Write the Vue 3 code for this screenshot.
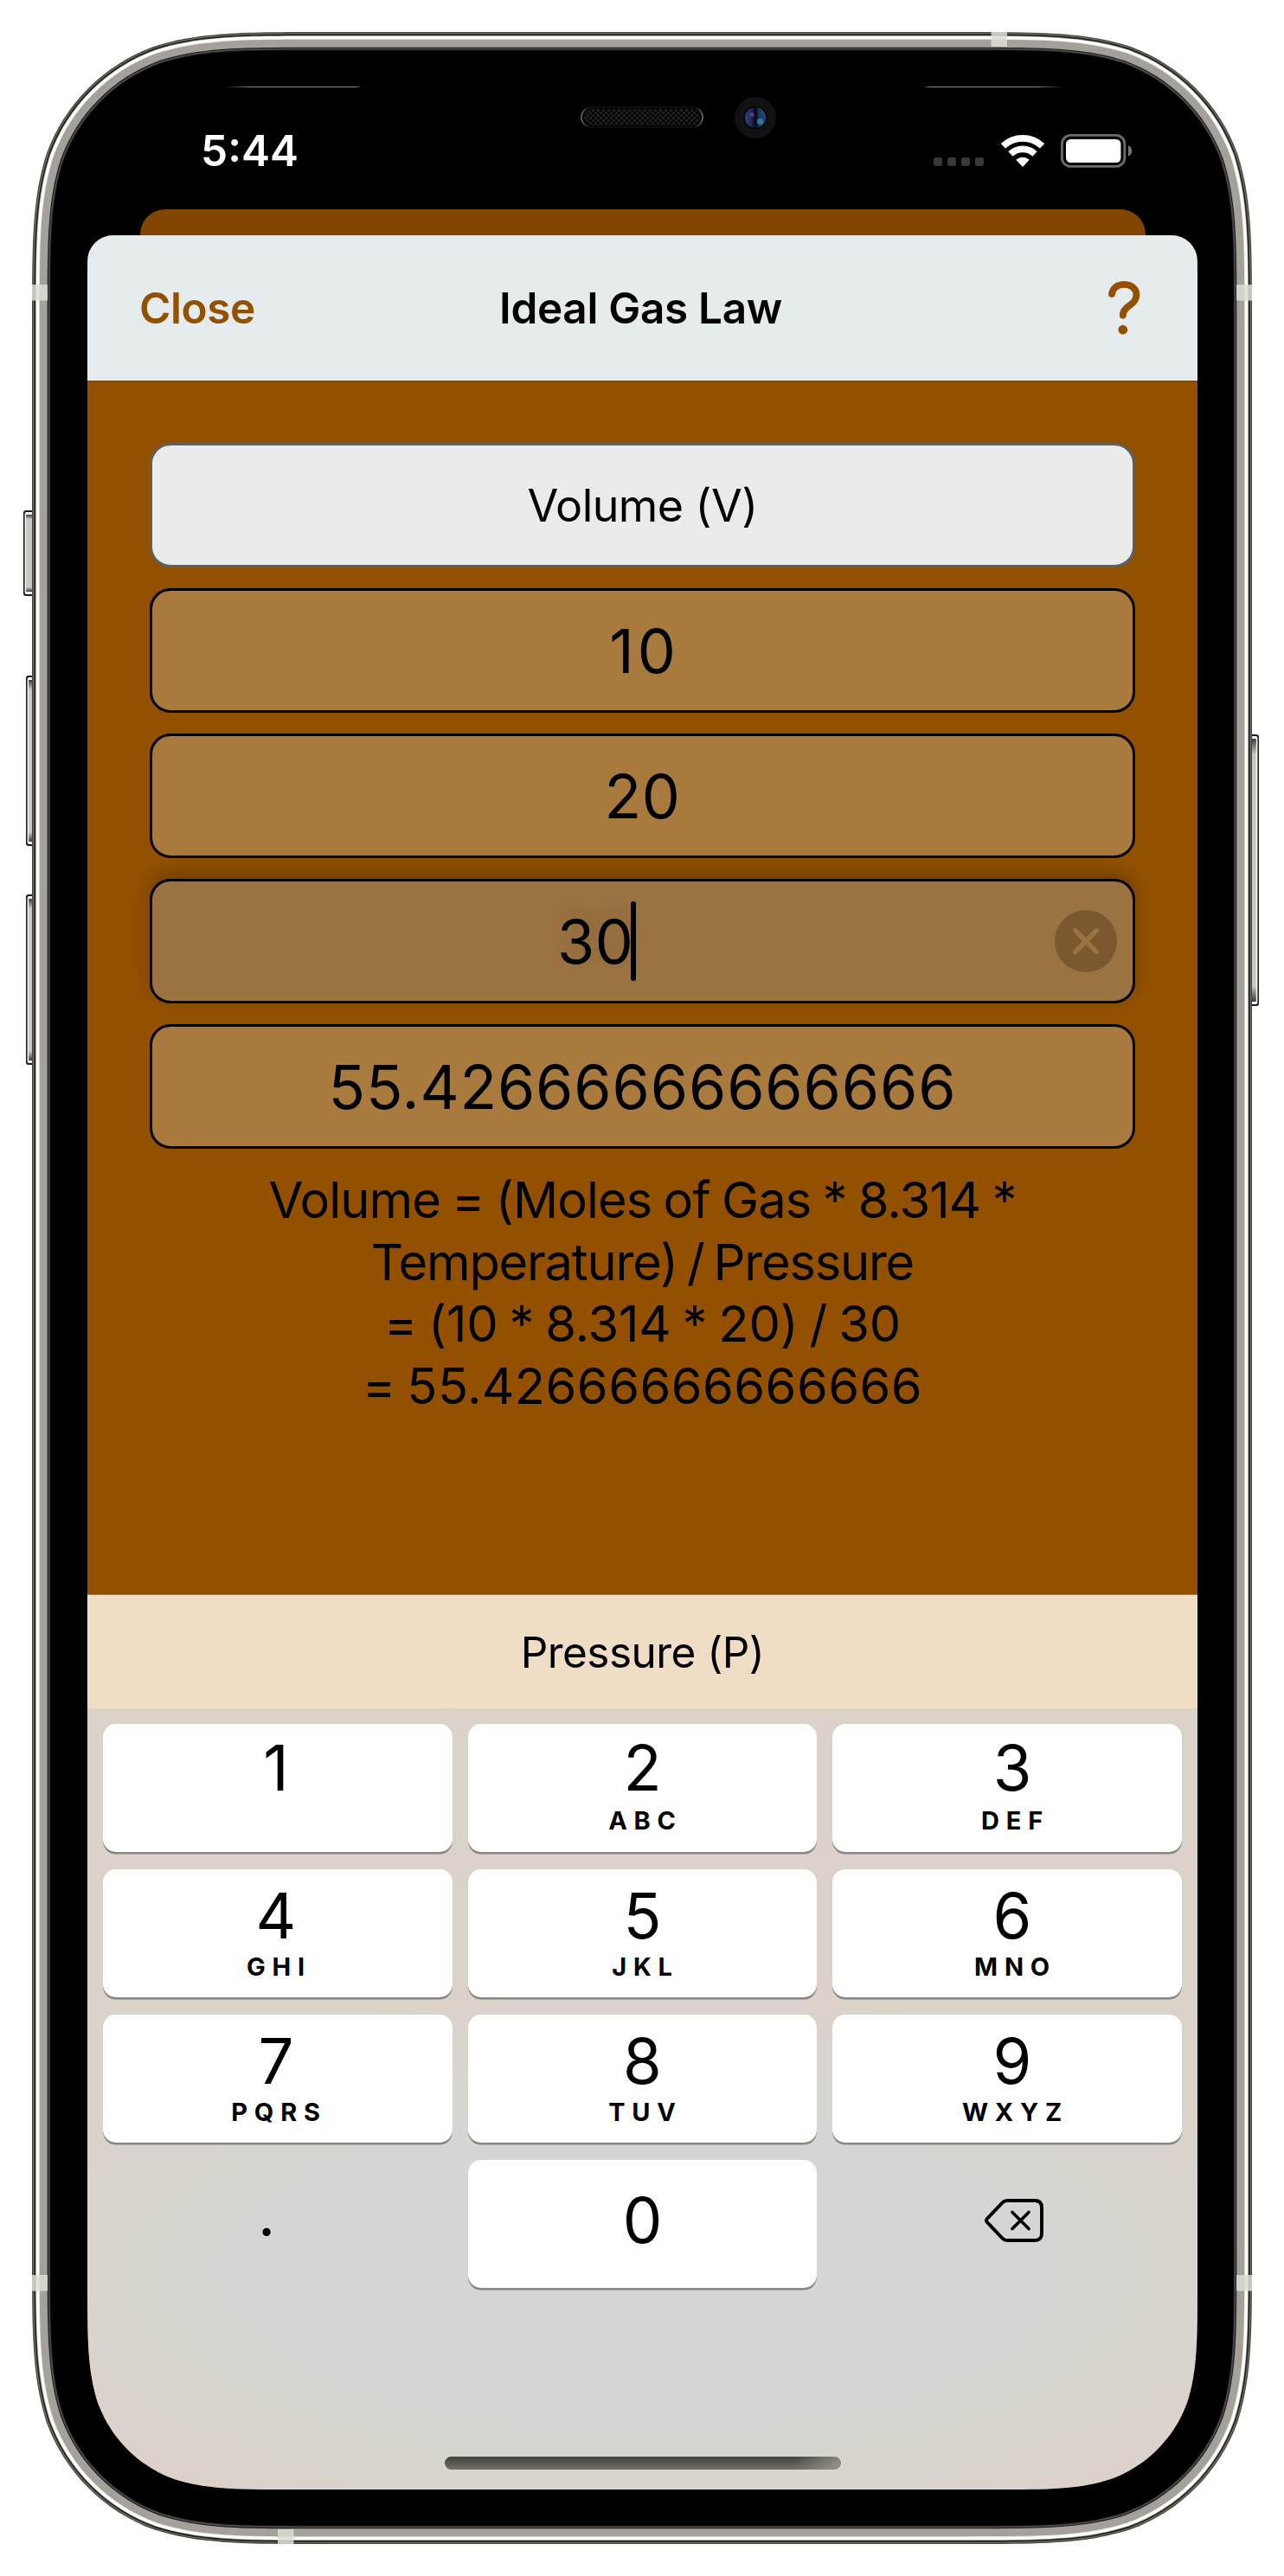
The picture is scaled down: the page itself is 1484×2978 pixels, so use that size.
<script setup>
// Rounded rectangle with continuous-curvature corners
function squircle(x, y, w, h, r) {
  const a = 1.52866 * r, b = 1.08849 * r, c = 0.86841 * r, d = 0.63149 * r
  const e = 0.37282 * r, f = 0.16906 * r, g = 0.07491 * r
  const R = x + w, B = y + h
  return [
    `M${x + a} ${y}H${R - a}`,
    `C${R - b} ${y} ${R - c} ${y} ${R - d} ${y + g}`,
    `C${R - e} ${y + f} ${R - f} ${y + e} ${R - g} ${y + d}`,
    `C${R} ${y + c} ${R} ${y + b} ${R} ${y + a}`,
    `V${B - a}`,
    `C${R} ${B - b} ${R} ${B - c} ${R - g} ${B - d}`,
    `C${R - f} ${B - e} ${R - e} ${B - f} ${R - d} ${B - g}`,
    `C${R - c} ${B} ${R - b} ${B} ${R - a} ${B}`,
    `H${x + a}`,
    `C${x + b} ${B} ${x + c} ${B} ${x + d} ${B - g}`,
    `C${x + e} ${B - f} ${x + f} ${B - e} ${x + g} ${B - d}`,
    `C${x} ${B - c} ${x} ${B - b} ${x} ${B - a}`,
    `V${y + a}`,
    `C${x} ${y + b} ${x} ${y + c} ${x + g} ${y + d}`,
    `C${x + f} ${y + e} ${x + e} ${y + f} ${x + d} ${y + g}`,
    `C${x + c} ${y} ${x + b} ${y} ${x + a} ${y}Z`,
  ].join('')
}

const layers = [
  [0, '#45443f'], [1.3, '#7b7a72'], [2.3, '#24231f'], [4, '#8d8c85'], [4.7, '#fdfefb'],
  [8, '#e4e3df'], [8.8, '#a5a19a'], [17.7, '#19191b'], [18.8, '#4c4c4f'], [20.6, '#161617'], [21.4, '#000'],
].map(([i, fill]) => ({ fill, d: squircle(37 + i, 37 + i, 1410 - 2 * i, 2904 - 2 * i, 223 - i) }))

const screenClip = { clipPath: `path("${squircle(0, 0, 1283, 2777, 159)}")` }

const sideButtons = [
  { x: 27, y: 590, w: 14, h: 99, side: 'left' },
  { x: 30, y: 781, w: 11, h: 197, side: 'left' },
  { x: 30, y: 1034, w: 11, h: 197, side: 'left' },
  { x: 1443, y: 849, w: 12, h: 314, side: 'right' },
]

const keys = [
  { n: '1', l: '', first: true }, { n: '2', l: 'ABC', first: true }, { n: '3', l: 'DEF', first: true },
  { n: '4', l: 'GHI' }, { n: '5', l: 'JKL' }, { n: '6', l: 'MNO' },
  { n: '7', l: 'PQRS' }, { n: '8', l: 'TUV' }, { n: '9', l: 'WXYZ' },
]
</script>

<template>
  <div class="device">
    <svg class="frame" width="1484" height="2978" viewBox="0 0 1484 2978" aria-hidden="true">
      <defs>
        <linearGradient id="btn" x1="0" y1="0" x2="0" y2="1">
          <stop offset="0" stop-color="#3c3b38" />
          <stop offset=".06" stop-color="#c9c8c4" />
          <stop offset=".94" stop-color="#c9c8c4" />
          <stop offset="1" stop-color="#3c3b38" />
        </linearGradient>
        <pattern id="mesh" width="6" height="6" patternUnits="userSpaceOnUse">
          <rect width="6" height="6" fill="#060606" />
          <rect width="3" height="3" fill="#1f1f1f" />
          <rect x="3" y="3" width="3" height="3" fill="#1f1f1f" />
        </pattern>
        <linearGradient id="edge">
          <stop offset="0" stop-color="#6a6a6a" />
          <stop offset=".06" stop-color="#121212" />
          <stop offset=".94" stop-color="#121212" />
          <stop offset="1" stop-color="#6a6a6a" />
        </linearGradient>
        <linearGradient id="seamL">
          <stop offset="0" stop-color="#8a8a8a" stop-opacity="0" />
          <stop offset=".2" stop-color="#8a8a8a" />
          <stop offset=".96" stop-color="#8a8a8a" />
          <stop offset="1" stop-color="#8a8a8a" stop-opacity="0" />
        </linearGradient>
        <linearGradient id="seamR">
          <stop offset="0" stop-color="#8a8a8a" stop-opacity="0" />
          <stop offset=".04" stop-color="#8a8a8a" />
          <stop offset=".8" stop-color="#8a8a8a" />
          <stop offset="1" stop-color="#8a8a8a" stop-opacity="0" />
        </linearGradient>
        <linearGradient id="lens">
          <stop offset="0" stop-color="#1d4a72" />
          <stop offset=".3" stop-color="#25285a" />
          <stop offset=".5" stop-color="#05060f" />
          <stop offset=".7" stop-color="#173a66" />
          <stop offset="1" stop-color="#1b4a7c" />
        </linearGradient>
      </defs>
      <g v-for="b in sideButtons" :key="b.x + '-' + b.y">
        <rect :x="b.x" :y="b.y" :width="b.w" :height="b.h" rx="3" fill="#1c1c1a" />
        <rect :x="b.x + 1.6" :y="b.y + 2" :width="b.w - 3.2" :height="b.h - 4" rx="2" fill="#f4f5f0" />
        <rect
          :x="b.side === 'left' ? b.x + 3.2 : b.x" :y="b.y + 5"
          :width="b.w - 3.2" :height="b.h - 10" fill="url(#btn)"
        />
      </g>
      <path v-for="(p, i) in layers" :key="i" :d="p.d" :fill="p.fill" />
      <g fill="#dcddd3" fill-opacity=".85">
        <rect x="1145.5" y="37" width="18.5" height="17" />
        <rect x="321" y="2924" width="18.5" height="17" />
        <rect x="37" y="329" width="18" height="18.5" />
        <rect x="1429" y="329" width="18" height="18.5" />
        <rect x="37" y="2630" width="18" height="18.5" />
        <rect x="1429" y="2630" width="18" height="18.5" />
      </g>
      <rect x="258" y="100" width="160" height="1" fill="url(#seamL)" />
      <rect x="1068" y="100" width="162" height="1" fill="url(#seamR)" />
      <rect x="672" y="124" width="140" height="23" rx="11.5" fill="#050505" stroke="url(#edge)" stroke-width="1.6" />
      <rect x="675" y="126" width="134" height="19" rx="9.5" fill="url(#mesh)" />
      <circle cx="873" cy="136" r="24" fill="#111112" />
      <circle cx="873" cy="136" r="13.5" fill="#050506" />
      <circle cx="873" cy="136" r="12" fill="url(#lens)" />
      <circle cx="869" cy="132.5" r="2.6" fill="#6a3d92" fill-opacity=".8" />
      <circle cx="878.5" cy="140.5" r="3.6" fill="#3f86ad" fill-opacity=".75" />
    </svg>

    <div class="screen" :style="screenClip">
      <div class="status">
        <span class="time">5:44</span>
        <span class="signal"><i /><i /><i /><i /></span>
        <svg class="wifi" width="50" height="37" viewBox="0 0 50 37">
          <path d="M2.4 12.8A33.1 33.1 0 0 1 47.6 12.8M11 22A20.5 20.5 0 0 1 39 22" fill="none" stroke="#fff" stroke-width="7.7" />
          <path d="M25 37L17.3 28.7A11.3 11.3 0 0 1 32.7 28.7Z" fill="#fff" />
        </svg>
        <svg width="83" height="39" viewBox="0 0 83 39">
          <rect x="1.4" y="1.4" width="72.4" height="36" rx="10" fill="none" stroke="#6c6c6c" stroke-width="2.8" />
          <rect x="6" y="6" width="63.4" height="27" rx="5.5" fill="#fff" />
          <path d="M78 13.2Q82 15 82 19.4T78 25.6Z" fill="#777" />
        </svg>
      </div>

      <div class="behind" />

      <div class="sheet">
        <header class="nav">
          <span class="close">Close</span>
          <span class="title">Ideal Gas Law</span>
          <span class="help">
            <svg width="38" height="62" viewBox="0 0 38 62">
              <path d="M4 14.8C5.2 8 10.5 3.9 18 3.9C26.5 3.9 32.5 8.6 32.5 16C32.5 22 29 25.2 24 28.6C19 32 16.8 34.6 16.8 39.6" fill="none" stroke="#935100" stroke-width="7.8" stroke-linecap="round" />
              <circle cx="16.8" cy="56.2" r="5.4" fill="#935100" />
            </svg>
          </span>
        </header>

        <main class="body">
          <div class="field picker">Volume (V)</div>
          <div class="field ten">10</div>
          <div class="field twenty">20</div>
          <div class="field focused">
            <span class="value">30</span><span class="caret" />
            <svg class="clear" width="72" height="72" viewBox="0 0 72 72">
              <circle cx="36" cy="36" r="36" fill="#7a5931" />
              <path d="M23.5 23.5L48.5 48.5M48.5 23.5L23.5 48.5" stroke="#9b7241" stroke-width="5.4" stroke-linecap="round" />
            </svg>
          </div>
          <div class="field result">55.42666666666666</div>
          <div class="formula">
            <div class="f1">Volume = (Moles of Gas * 8.314 *</div>
            <div class="f2">Temperature) / Pressure</div>
            <div class="f3">= (10 * 8.314 * 20) / 30</div>
            <div class="f4">= 55.42666666666666</div>
          </div>
        </main>

        <div class="accessory">Pressure (P)</div>

        <div class="keyboard">
          <div class="keys">
            <div v-for="k in keys" :key="k.n" class="key" :class="{ first: k.first }">
              <span class="num">{{ k.n }}</span>
              <span class="letters">{{ k.l }}</span>
            </div>
            <div class="key plain"><span class="dot">.</span></div>
            <div class="key zero"><span class="num">0</span></div>
            <div class="key plain erase">
              <svg width="68" height="50" viewBox="0 0 68 50" fill="none" stroke="#000" stroke-width="3.9" stroke-linecap="round" stroke-linejoin="round">
                <path d="M26 2H58Q66 2 66 10V40Q66 48 58 48H26Q23 48 20.8 45.8L3 27.2Q1 25 3 22.8L20.8 4.2Q23 2 26 2Z" />
                <path d="M32 15.4L51 34.6M51 15.4L32 34.6" stroke-width="3.6" />
              </svg>
            </div>
          </div>
          <div class="home" />
        </div>
      </div>
    </div>
  </div>
</template>

<style scoped>
.device {
  position: relative;
  box-sizing: border-box;
  width: 1484px;
  height: 2978px;
  padding: 101px 100px 100px 101px;
  background: #fff;
  color: #000;
  font-family: Inter, "Liberation Sans", sans-serif;
}
.frame {
  position: absolute;
  left: 0;
  top: 0;
}
.screen {
  position: relative;
  display: flex;
  flex-direction: column;
  width: 1283px;
  height: 2777px;
}
.status {
  display: flex;
  align-items: center;
  box-sizing: border-box;
  height: 141px;
  padding: 5px 75px 0 131px;
}
.time {
  flex: 1;
  color: #fff;
  font-size: 49.5px;
  font-weight: 600;
}
.signal {
  display: flex;
  gap: 6px;
  margin: 26px 19.5px 0 0;
}
.signal i {
  width: 10px;
  height: 10px;
  border-radius: 3px;
  background: #3a3a3a;
}
.wifi {
  margin-right: 19.5px;
}
.behind {
  height: 30px;
  margin: 0 60px 0 60.5px;
  border-radius: 29px 29px 0 0;
  background: #824600;
}
.sheet {
  flex: 1;
  display: flex;
  flex-direction: column;
  overflow: hidden;
  border-radius: 30px 30px 0 0;
  background: #935100;
}
.nav {
  display: grid;
  grid-template-columns: 1fr auto 1fr;
  align-items: center;
  box-sizing: border-box;
  height: 169px;
  padding: 0 65px 1px 60px;
  background: #e6ebed;
  border-bottom: 1px solid #6b3c05;
  font-size: 49.5px;
  font-weight: 600;
}
.close {
  color: #935100;
  letter-spacing: -0.45px;
}
.title {
  padding-left: 1px;
  letter-spacing: -0.34px;
}
.help {
  display: flex;
  justify-content: flex-end;
}
.body {
  display: flex;
  flex-direction: column;
  gap: 24px;
  box-sizing: border-box;
  height: 1402px;
  padding: 71px 72px 0;
}
.field {
  display: flex;
  align-items: center;
  justify-content: center;
  box-sizing: border-box;
  height: 144px;
  border: 3px solid #000;
  border-radius: 24px;
  background: #a87a3e;
  font-size: 70px;
}
.picker {
  border-color: #5d6064;
  background: #ebebeb;
  font-size: 52px;
  letter-spacing: -0.6px;
}
.ten {
  padding-left: 4px;
  letter-spacing: 4px;
}
.twenty {
  letter-spacing: 0.6px;
}
.focused {
  justify-content: flex-start;
  padding-left: 468px;
  padding-right: 18px;
  background: #9b7241;
  box-shadow: 0 -8px 20px rgba(0, 0, 0, 0.24);
}
.value {
  letter-spacing: 0.4px;
  text-shadow: 0 -8px 20px rgba(0, 0, 0, 0.12);
}
.caret {
  width: 6px;
  height: 92px;
  margin-left: -3.5px;
  border-radius: 3px;
  background: #000;
}
.clear {
  margin-left: auto;
}
.result {
  letter-spacing: 0.8px;
}
.formula {
  font-size: 57.8px;
  line-height: 71.5px;
  text-align: center;
  white-space: nowrap;
}
.f1 {
  letter-spacing: -0.95px;
  word-spacing: -2px;
}
.f2 {
  letter-spacing: -1.2px;
  word-spacing: -4px;
}
.f3 {
  letter-spacing: -0.2px;
  word-spacing: -3px;
}
.f4 {
  letter-spacing: 0.45px;
  word-spacing: -4px;
}
.accessory {
  box-sizing: border-box;
  height: 132px;
  padding-top: 1px;
  border-top: 1px solid #a98560;
  background: #efddc6;
  font-size: 49.5px;
  line-height: 131px;
  letter-spacing: -0.55px;
  text-align: center;
}
.keyboard {
  flex: 1;
  display: flex;
  flex-direction: column;
  align-items: center;
  background: radial-gradient(ellipse 760px 300px at 50% 650px, #d6d6d7 0%, #d6d6d5 45%, #d9d5cf 80%, #dbd2ca 108%);
}
.keys {
  display: grid;
  grid-template-columns: repeat(3, 403.5px);
  grid-auto-rows: 148px;
  gap: 20px 18px;
  margin-top: 18px;
}
.key {
  display: flex;
  flex-direction: column;
  align-items: center;
  box-sizing: border-box;
  padding-top: 14px;
  border-radius: 15px;
  background: #fff;
  box-shadow: 0 2.6px 0 #8b8680;
}
.key:nth-child(3n + 1) {
  padding-right: 4px;
}
.key:nth-child(3n) {
  padding-left: 12px;
}
.first {
  padding-top: 11px;
}
.num {
  font-size: 72.4px;
  line-height: 80px;
}
.letters {
  padding-left: 7px;
  font-size: 29px;
  font-weight: 700;
  line-height: 38px;
  letter-spacing: 7.8px;
}
.first .letters {
  padding-top: 2px;
}
.zero {
  padding-top: 30px;
}
.plain {
  background: none;
  box-shadow: none;
}
.dot {
  margin: 9px 0 0 -22px;
  font-size: 70px;
  line-height: 80px;
}
.key.erase {
  align-items: flex-end;
  padding: 45px 160px 0 0;
}
.home {
  width: 458px;
  height: 15px;
  margin-top: 195px;
  border-radius: 7.5px;
  background:
    linear-gradient(100deg, rgba(160, 155, 148, 0) 88%, rgba(160, 155, 148, 0.8) 100%),
    linear-gradient(#44443f, #716c66);
}
</style>
